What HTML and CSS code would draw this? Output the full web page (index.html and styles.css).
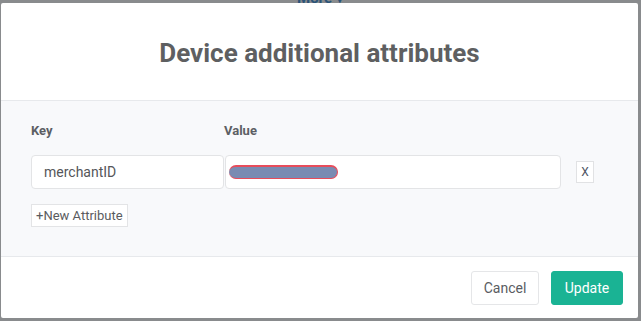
FILE: index.html
```html
<!DOCTYPE html>
<html>
<head>
<meta charset="utf-8">
<link rel="stylesheet" href="styles.css">
</head>
<body>
<div class="page-strip"><span class="more">More &#9662;</span></div>
<div class="modal">
  <div class="modal-header">
    <h2 class="modal-title">Device additional attributes</h2>
  </div>
  <div class="modal-body">
    <div class="labels">
      <div class="label label-key">Key</div>
      <div class="label">Value</div>
    </div>
    <div class="attr-row">
      <div class="field field-key">merchantID</div>
      <div class="field field-value"><span class="redacted"></span></div>
      <button class="remove">X</button>
    </div>
    <button class="add">+New Attribute</button>
  </div>
  <div class="modal-footer">
    <button class="btn btn-cancel">Cancel</button>
    <button class="btn btn-update">Update</button>
  </div>
</div>
</body>
</html>
```
FILE: styles.css
```css
html, body {
  margin: 0;
  padding: 0;
}
body {
  background: #898b8d;
  font-family: Roboto, "Liberation Sans", sans-serif;
  width: 641px;
  height: 321px;
  overflow: hidden;
}
.page-strip {
  height: 3px;
  overflow: hidden;
  padding-left: 297px;
}
.more {
  display: block;
  margin-top: -9px;
  font-size: 15px;
  font-weight: 700;
  line-height: 14px;
  color: #2b5478;
}
.modal {
  margin-left: 1px;
  width: 637px;
  height: 315px;
  background: #fff;
  border-radius: 2px;
  display: flex;
  flex-direction: column;
}
.modal-header {
  height: 97px;
  flex: none;
  border-bottom: 1px solid #e7e9ec;
  display: flex;
  align-items: center;
  justify-content: center;
}
.modal-title {
  margin: 0;
  font-size: 26px;
  font-weight: 700;
  color: #5e5f61;
  padding-top: 2px;
}
.modal-body {
  height: 156px;
  flex: none;
  background: #f8f9fb;
  border-bottom: 1px solid #e7e9ec;
  box-sizing: border-box;
  padding: 21px 30px 0;
}
.labels {
  display: flex;
  height: 17px;
  margin-bottom: 16px;
}
.label {
  font-size: 13px;
  font-weight: 700;
  color: #5c5f64;
  line-height: 17px;
}
.label-key {
  width: 193px;
}
.attr-row {
  display: flex;
  align-items: center;
}
.field {
  height: 34px;
  box-sizing: border-box;
  border: 1px solid #e3e4e6;
  border-radius: 4px;
  background: #fff;
  display: flex;
  align-items: center;
}
.field-key {
  width: 193px;
  padding-left: 12px;
  font-size: 14px;
  color: #555659;
}
.field-value {
  width: 336px;
  margin-left: 1px;
  padding-left: 3px;
}
.redacted {
  display: block;
  width: 109px;
  height: 14px;
  box-sizing: border-box;
  background: #798bb2;
  border-top: 2px solid #e74c5b;
  border-bottom: 1px solid #e74c5b;
  border-right: 1px solid #e74c5b;
  border-radius: 7px;
  margin-top: -1px;
}
.remove {
  margin-left: 15px;
  width: 18px;
  height: 22px;
  padding: 0;
  box-sizing: border-box;
  border: 1px solid #e1e2e4;
  background: #fff;
  font-family: inherit;
  font-size: 12px;
  color: #4f5565;
  line-height: 20px;
}
.add {
  margin-top: 15px;
  height: 23px;
  padding: 0 4px;
  box-sizing: border-box;
  border: 1px solid #e3e4e6;
  background: #fff;
  font-family: inherit;
  font-size: 13px;
  color: #5a5b5e;
  line-height: 21px;
}
.modal-footer {
  flex: 1;
  display: flex;
  justify-content: flex-end;
  align-items: flex-start;
  gap: 12px;
  padding: 14px 15px 0 0;
}
.btn {
  height: 34px;
  box-sizing: border-box;
  border-radius: 3px;
  font-family: inherit;
  font-size: 14px;
  padding: 0;
}
.btn-cancel {
  width: 68px;
  border: 1px solid #e5e6e8;
  background: #fff;
  color: #5a5c62;
}
.btn-update {
  width: 72px;
  border: 1px solid #1ab394;
  background: #1ab394;
  color: #fff;
}
```
